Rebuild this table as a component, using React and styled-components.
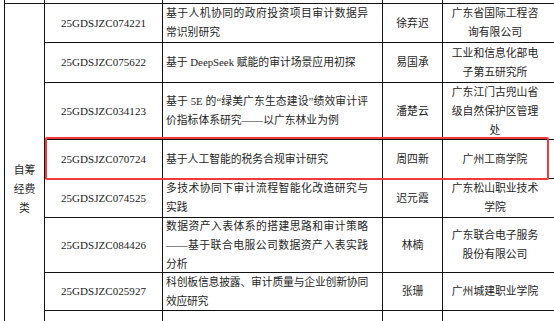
import React from 'react';
import styled, { createGlobalStyle } from 'styled-components';

const Global = createGlobalStyle`
  html, body {
    margin: 0;
    padding: 0;
    background: #ffffff;
    overflow: hidden;
  }
  body {
    font-family: "Liberation Serif", "Noto Sans CJK SC", serif;
    color: #1e1e1e;
  }
`;

const Page = styled.div`
  position: relative;
  width: 554px;
  height: 321px;
  overflow: hidden;
`;

const Table = styled.div`
  display: grid;
  grid-template-columns: 40px 118px 220px 60px 120px;
  grid-template-rows: ${(p) => p.$rows};
  margin-left: 4px;
  border-left: 1px solid #111;
  width: max-content;
`;

const Cell = styled.div`
  box-sizing: border-box;
  border-right: 1px solid #111;
  border-bottom: 1px solid #111;
  display: flex;
  flex-direction: column;
  justify-content: center;
  font-family: "Liberation Serif", "Noto Sans CJK SC", serif;
  font-size: 10.8px;
  line-height: 19px;
  color: #262626;
  overflow: visible;
`;

const CategoryCell = styled(Cell)`
  grid-column: 1;
  grid-row: 2 / -1;
  justify-content: flex-start;
  padding: 157px 7px 0;
  text-align: center;
  color: #2a2a2a;
`;

const CodeCell = styled(Cell)`
  text-align: center;
  font-size: 11px;
  color: #1a1a1a;
  letter-spacing: 0.05px;
`;

const TitleCell = styled(Cell)`
  padding: 0 14px 0 3px;
`;

const TitleText = styled.div`
  text-align: justify;
  letter-spacing: ${(p) => (p.$tight ? '-0.3px' : '0')};
`;

const NameCell = styled(Cell)`
  text-align: center;
`;

const OrgCell = styled(Cell)`
  padding: 0 22px 0 7px;
  text-align: center;
`;

const Highlight = styled.div`
  position: absolute;
  left: 45px;
  top: 137px;
  width: 504px;
  height: 43px;
  box-sizing: border-box;
  border: 2px solid #ef3b3b;
  border-radius: 2px;
  box-shadow: 0 0 1px rgba(239, 59, 59, 0.55);
  pointer-events: none;
`;

const rows = [
  {
    code: '25GDSJZC074221',
    title: '基于人机协同的政府投资项目审计数据异常识别研究',
    name: '徐弃迟',
    org: '广东省国际工程咨询有限公司',
  },
  {
    code: '25GDSJZC075622',
    title: '基于 DeepSeek 赋能的审计场景应用初探',
    name: '易国承',
    org: '工业和信息化部电子第五研究所',
  },
  {
    code: '25GDSJZC034123',
    title: '基于 5E 的“绿美广东生态建设”绩效审计评价指标体系研究——以广东林业为例',
    name: '潘楚云',
    org: '广东江门古兜山省级自然保护区管理处',
  },
  {
    code: '25GDSJZC070724',
    title: '基于人工智能的税务合规审计研究',
    name: '周四新',
    org: '广州工商学院',
  },
  {
    code: '25GDSJZC074525',
    title: '多技术协同下审计流程智能化改造研究与实践',
    name: '迟元霞',
    org: '广东松山职业技术学院',
  },
  {
    code: '25GDSJZC084426',
    title: '数据资产入表体系的搭建思路和审计策略——基于联合电服公司数据资产入表实践分析',
    name: '林楠',
    org: '广东联合电子服务股份有限公司',
  },
  {
    code: '25GDSJZC025927',
    title: '科创板信息披露、审计质量与企业创新协同效应研究',
    tight: true,
    name: '张珊',
    org: '广州城建职业学院',
  },
];

const rowHeights = '4px 39px 40px 57px 39px 39px 55px 38px 40px';

export default function App() {
  return (
    <>
      <Global />
      <Page>
        <Table $rows={rowHeights}>
          <Cell />
          <Cell />
          <Cell />
          <Cell />
          <Cell />
          <CategoryCell>自筹经费类</CategoryCell>
          {rows.map((r) => (
            <React.Fragment key={r.code}>
              <CodeCell>{r.code}</CodeCell>
              <TitleCell>
                <TitleText $tight={r.tight}>{r.title}</TitleText>
              </TitleCell>
              <NameCell>{r.name}</NameCell>
              <OrgCell>{r.org}</OrgCell>
            </React.Fragment>
          ))}
          <CodeCell />
          <TitleCell />
          <NameCell />
          <OrgCell />
        </Table>
        <Highlight />
      </Page>
    </>
  );
}
